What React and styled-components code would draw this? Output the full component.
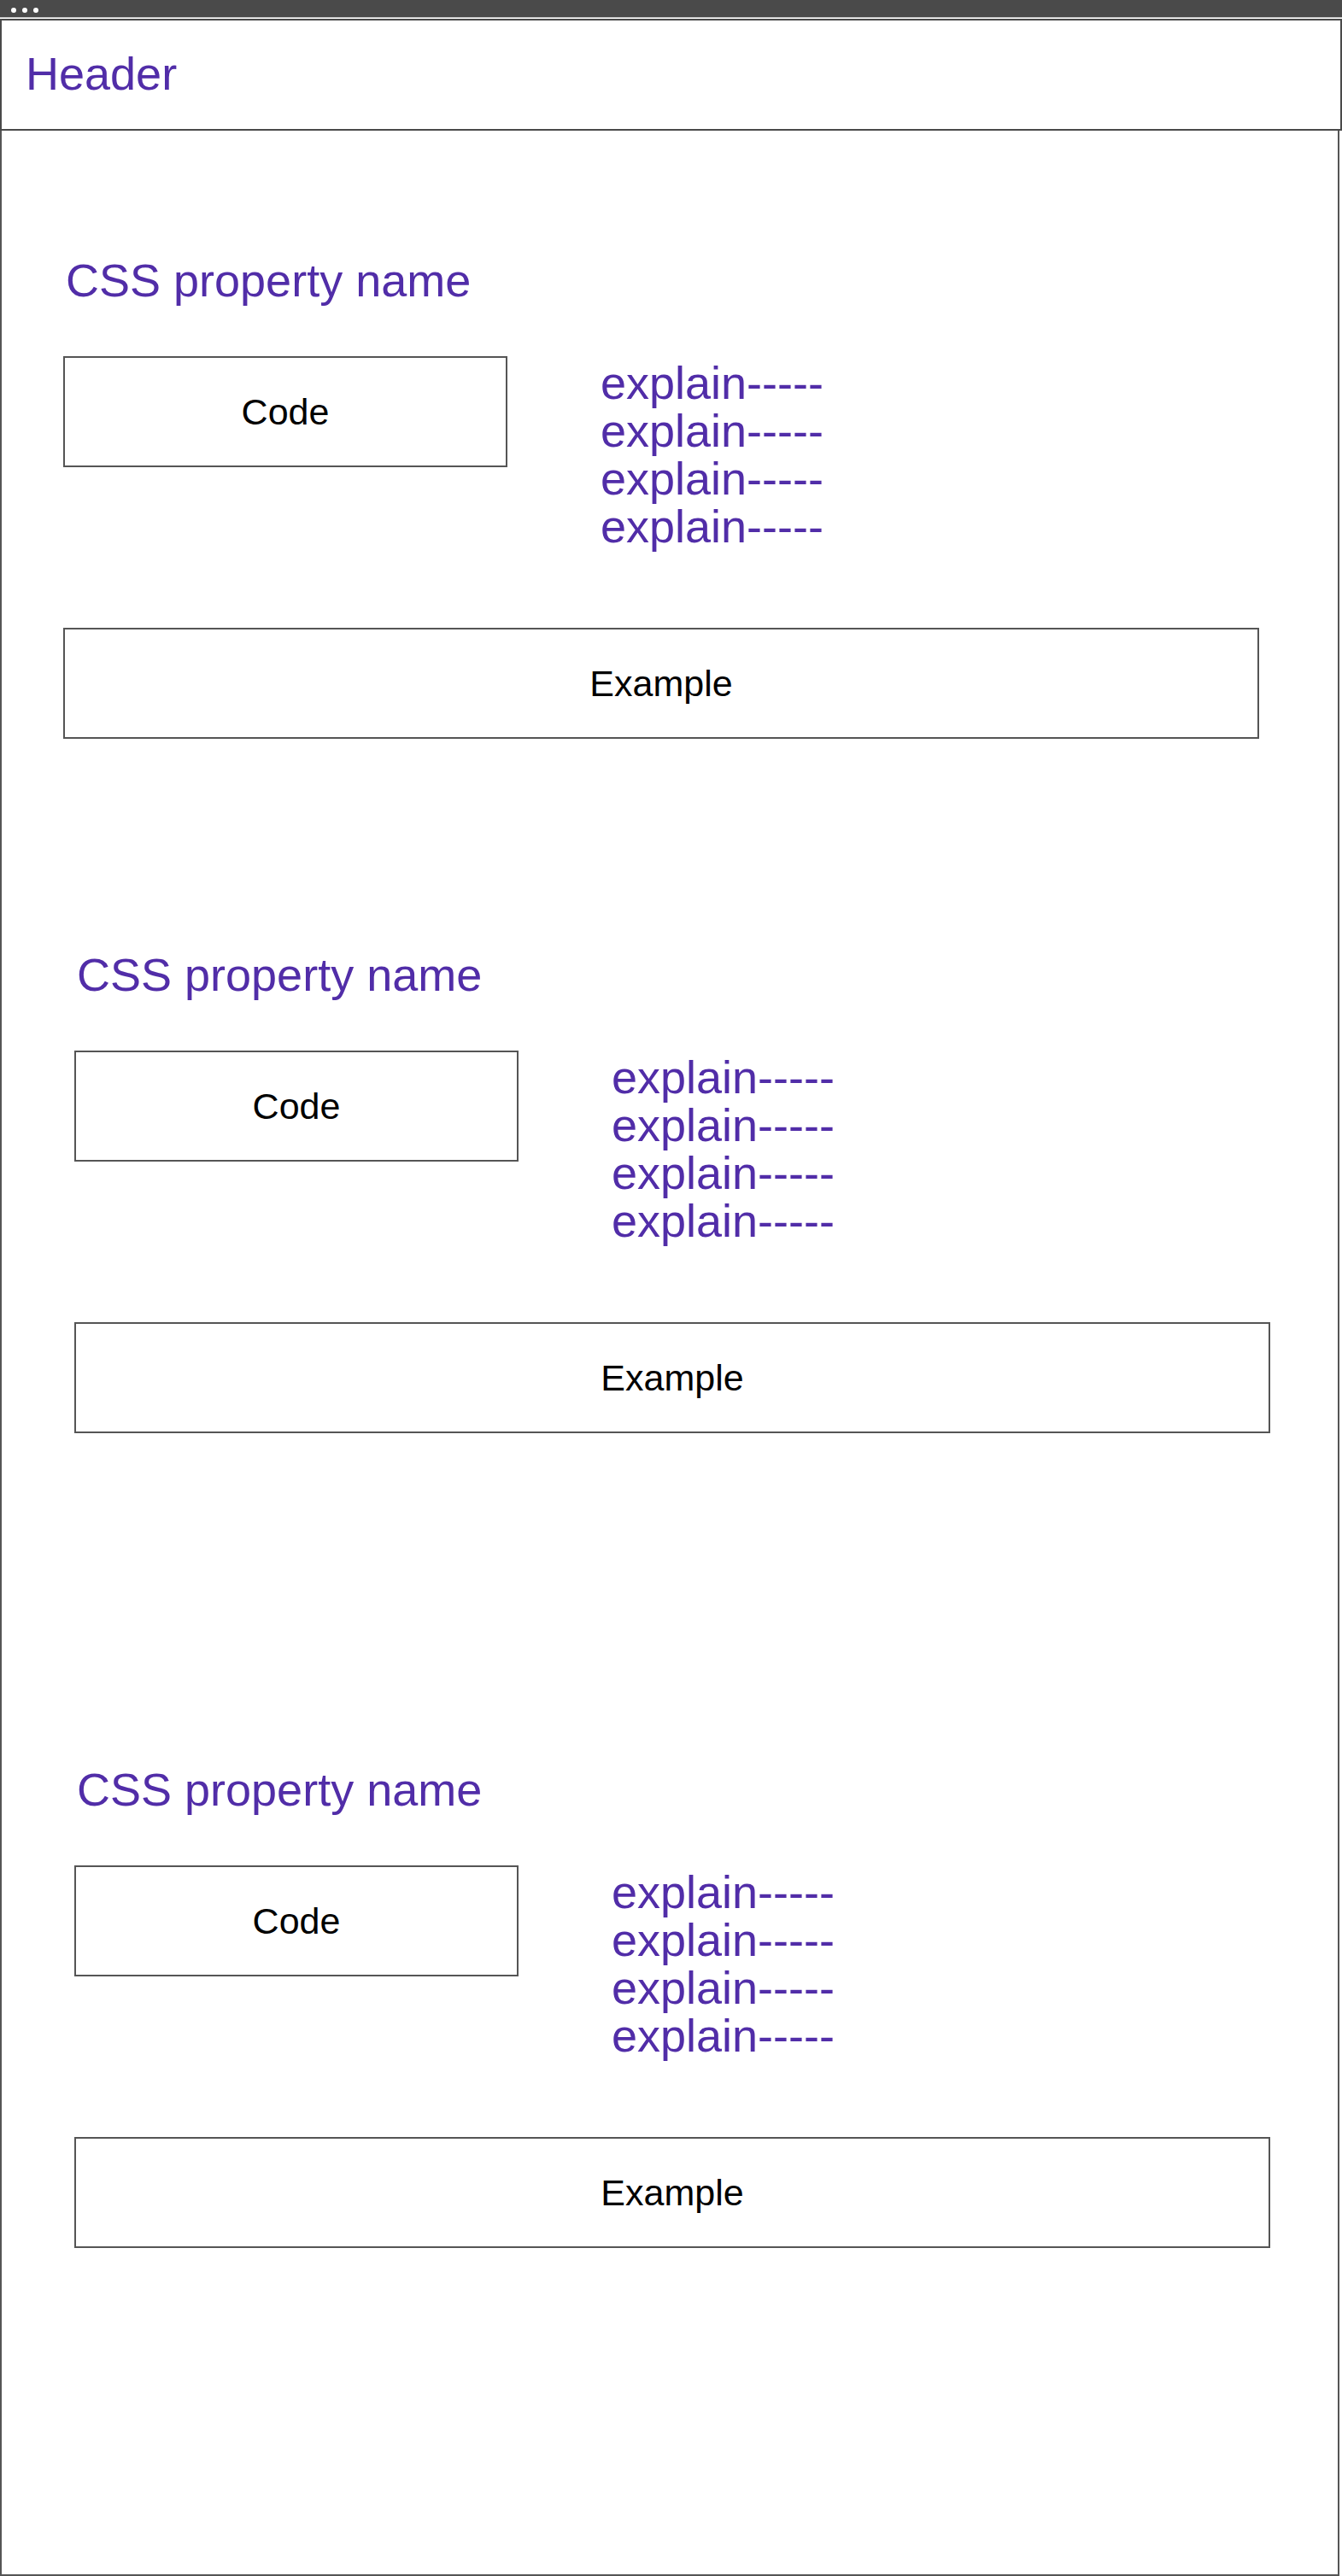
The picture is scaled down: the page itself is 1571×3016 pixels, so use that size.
import React from 'react';
import styled, { createGlobalStyle } from 'styled-components';

const GlobalStyle = createGlobalStyle`
  * { box-sizing: border-box; }
  html, body { margin: 0; padding: 0; background: #fff; }
  body { font-family: "Liberation Sans", Arial, Helvetica, sans-serif; }
`;

const PURPLE = '#512da8';
const LINE = '#555555';

const Window = styled.div`
  width: 1571px;
  height: 3016px;
  display: flex;
  flex-direction: column;
  background: #fff;
`;

const TitleBar = styled.div`
  height: 21px;
  flex-shrink: 0;
  background: #4a4a4a;
  border-bottom: 1px solid #c4c4c4;
  margin-bottom: 1px;
  display: flex;
  align-items: center;
  gap: 7px;
  padding: 4px 0 0 13px;
`;

const Dot = styled.span`
  width: 6px;
  height: 6px;
  border-radius: 50%;
  background: #ffffff;
`;

const Header = styled.header`
  height: 131px;
  flex-shrink: 0;
  border: 2px solid #4a4a4a;
  display: flex;
  align-items: center;
  padding: 0 0 3px 28px;
  font-size: 54px;
  line-height: 1;
  color: ${PURPLE};
`;

const Page = styled.main`
  flex: 1;
  width: 1568px;
  border: 2px solid ${LINE};
  border-top: none;
  padding-top: 148px;
  display: flex;
  flex-direction: column;
`;

const Section = styled.section`
  margin-top: ${(p) => p.$gap}px;
  margin-left: ${(p) => p.$indent}px;
  display: flex;
  flex-direction: column;
  align-items: flex-start;
`;

const Title = styled.h2`
  margin: 0 0 62px;
  padding-left: 3px;
  font-size: 54px;
  line-height: 54px;
  font-weight: 400;
  color: ${PURPLE};
`;

const Row = styled.div`
  display: flex;
  align-items: flex-start;
`;

const Box = styled.div`
  width: ${(p) => p.$width}px;
  height: 130px;
  border: 2px solid ${LINE};
  display: flex;
  align-items: center;
  justify-content: center;
  font-size: 43px;
  line-height: 1;
  color: #000;
`;

const Explain = styled.div`
  margin: 3px 0 0 109px;
  display: flex;
  flex-direction: column;
  font-size: 54px;
  line-height: 56px;
  color: ${PURPLE};
`;

const ExampleBox = styled(Box)`
  margin-top: 91px;
`;

const sections = [
  { gap: 0, indent: 72 },
  { gap: 249, indent: 85 },
  { gap: 390, indent: 85 },
];

function PropertySection({ gap, indent }) {
  return (
    <Section $gap={gap} $indent={indent}>
      <Title>CSS property name</Title>
      <Row>
        <Box $width={520}>Code</Box>
        <Explain>
          <span>explain-----</span>
          <span>explain-----</span>
          <span>explain-----</span>
          <span>explain-----</span>
        </Explain>
      </Row>
      <ExampleBox $width={1400}>Example</ExampleBox>
    </Section>
  );
}

export default function App() {
  return (
    <>
      <GlobalStyle />
      <Window>
        <TitleBar>
          <Dot />
          <Dot />
          <Dot />
        </TitleBar>
        <Header>Header</Header>
        <Page>
          {sections.map((s, i) => (
            <PropertySection key={i} gap={s.gap} indent={s.indent} />
          ))}
        </Page>
      </Window>
    </>
  );
}
